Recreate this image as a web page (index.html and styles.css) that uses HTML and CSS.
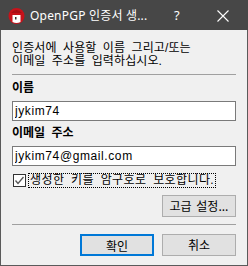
FILE: index.html
```html
<!DOCTYPE html>
<html>
    <head>
        <meta charset="utf-8">
        <title>OpenPGP 인증서 생성</title>
        <link rel="stylesheet" href="styles.css">
    </head>
    <body>
        <div class="window">
            <!-- 제목 표시줄 -->
            <div class="titlebar">
                <svg class="app-icon" width="18" height="16" viewBox="0 0 18 16">
                    <circle cx="8.5" cy="8" r="8" fill="#c8121a"/>
                    <path d="M3 5 Q8.5 -1 14 5" fill="#8a0a10" opacity="0.5"/>
                    <path d="M4.5 7 L12.5 7 L12.5 14 Q8.5 16 4.5 14 Z" fill="#fff"/>
                    <rect x="7" y="9" width="1.5" height="2.5" fill="#333"/>
                </svg>
                <span class="title">OpenPGP 인증서 생...</span>
                <span class="help">?</span>
                <svg class="close" width="12" height="12" viewBox="0 0 12 12">
                    <path d="M0.5 0.5 L11.5 11.5 M11.5 0.5 L0.5 11.5" stroke="#fff" stroke-width="1.1"/>
                </svg>
            </div>

            <!-- 내용 -->
            <div class="content">
                <p class="intro">인증서에 사용할 이름 그리고/또는<br>이메일 주소를 입력하십시오.</p>
                <div class="sep"></div>

                <div class="field-label">이름</div>
                <input class="field" type="text" value="jykim74">

                <div class="field-label">이메일 주소</div>
                <input class="field" type="text" value="jykim74@gmail.com">

                <div class="check-row">
                    <span class="checkbox">
                        <svg width="11" height="11" viewBox="0 0 11 11">
                            <path d="M1.5 5.5 L4 8.5 L9.5 2" fill="none" stroke="#555" stroke-width="1.3"/>
                        </svg>
                    </span>
                    <span class="check-label">생성한 키를 암구호로 보호합니다.</span>
                </div>

                <div class="adv-row">
                    <button class="btn">고급 설정...</button>
                </div>

                <div class="sep sep-bottom"></div>

                <div class="btn-row">
                    <button class="btn btn-default">확인</button>
                    <button class="btn">취소</button>
                </div>
            </div>
        </div>
    </body>
</html>
```

FILE: styles.css
```css
*{
    margin: 0px;
    padding: 0px;
    box-sizing: border-box;
}
body{
    width: 248px;
    height: 266px;
    overflow: hidden;
    background-color: #f0f0f0;
    font-family: "Liberation Sans", "Noto Sans CJK KR", sans-serif;
    font-size: 12px;
    color: #000;
}

/* 창 */
.window{
    width: 248px;
    height: 266px;
    border: 1px solid #5a5a5a;
    border-top: none;
    background-color: #f0f0f0;
}

/* 제목 표시줄 */
.titlebar{
    height: 30px;
    margin: 0px -1px;
    background-color: #474747;
    display: flex;
    align-items: center;
    color: #fff;
}
.app-icon{
    margin-left: 8px;
    margin-top: 1px;
}
.title{
    margin-left: 4px;
    font-family: "Noto Sans", "Noto Sans CJK KR", sans-serif;
    font-size: 12px;
    letter-spacing: 0.2px;
    width: 142px;
}
.help{
    font-family: "Noto Sans", sans-serif;
    font-size: 13px;
    margin-left: 2px;
}
.close{
    margin-left: 37px;
    margin-top: 1px;
}

/* 내용 */
.content{
    padding: 0px 11px;
}
.intro{
    margin-top: 12px;
    line-height: 13px;
    word-spacing: 3px;
    letter-spacing: 0.1px;
}
.sep{
    height: 1px;
    background-color: #a0a0a0;
    margin-top: 6px;
}
.field-label{
    margin-top: 6px;
    line-height: 14px;
    font-weight: bold;
    word-spacing: 3px;
}
.field + .field-label{
    margin-top: 5px;
}
.field{
    display: block;
    width: 100%;
    height: 20px;
    margin-top: 6px;
    border: 1px solid #7a7a7a;
    background-color: #fff;
    padding: 0px 2px;
    font-family: "Liberation Sans", "Noto Sans CJK KR", sans-serif;
    font-size: 12px;
    letter-spacing: 0.6px;
    outline: none;
}

/* 체크박스 */
.check-row{
    display: flex;
    align-items: center;
    margin-top: 7px;
    height: 15px;
}
.checkbox{
    width: 13px;
    height: 13px;
    border: 1px solid #333;
    background-color: #fff;
    display: flex;
    align-items: center;
    justify-content: center;
    margin-left: 1px;
}
.check-label{
    margin-left: 2px;
    border: 1px dotted #000;
    line-height: 13px;
    padding: 0px 1px;
    word-spacing: 3px;
    letter-spacing: 0.4px;
}

/* 버튼 */
.adv-row{
    display: flex;
    justify-content: flex-end;
    margin-top: 7px;
}
.sep-bottom{
    margin-top: 7px;
}
.btn-row{
    display: flex;
    justify-content: flex-end;
    gap: 8px;
    margin-top: 9px;
}
.btn{
    width: 74px;
    height: 22px;
    border: 1px solid #adadad;
    background-color: #e1e1e1;
    font-family: "Noto Sans CJK KR", sans-serif;
    font-size: 12px;
    line-height: 20px;
    color: #000;
    word-spacing: 2px;
}
.btn-default{
    border: 2px solid #0078d7;
}
```
